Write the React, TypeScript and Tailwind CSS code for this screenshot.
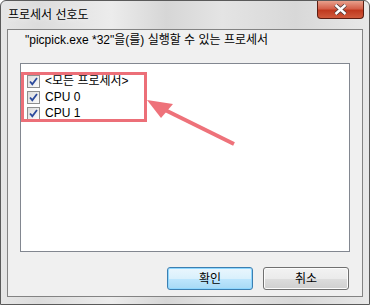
import React from "react";

const font = { fontFamily: '"Liberation Sans", "Noto Sans CJK KR", sans-serif' };

function CheckItem({ label }: { label: string }) {
  return (
    <div className="flex items-center h-[16px]">
      <span className="w-[13px] h-[13px] border border-[#8e8f8f] bg-gradient-to-br from-[#dcdcdc] to-[#fbfbfb] flex items-center justify-center">
        <svg width="11" height="11" viewBox="0 0 11 11">
          <path d="M2 5.5 L4.3 8.2 L9 2" fill="none" stroke="#2c4a9c" strokeWidth="1.8" />
        </svg>
      </span>
      <span className="ml-[5px] text-[12px] leading-none text-black">{label}</span>
    </div>
  );
}

export default function App() {
  return (
    <div
      className="relative w-[370px] h-[305px] flex flex-col border border-[#5a5a5a] rounded-t-[6px] bg-[linear-gradient(90deg,#e6e6e6_0%,#dcdcdc_10%,#ececec_30%,#d6d6d6_45%,#e4e4e4_60%,#d8d8d8_80%,#e8e8e8_100%)] overflow-hidden"
      style={font}
    >
      {/* 제목 표시줄 */}
      <div className="h-[28px] flex items-start justify-between shrink-0">
        <span className="mt-[8px] ml-[7px] text-[12px] leading-none text-black [text-shadow:0_0_6px_#ffffff]">
          프로세서 선호도
        </span>
        <div className="mr-[5px] w-[47px] h-[18px] rounded-b-[4px] border border-t-0 border-[#5b1d12] bg-[linear-gradient(180deg,#e8a08c_0%,#d4604a_45%,#c0391f_55%,#cf5a3c_100%)] flex items-center justify-center">
          <svg width="13" height="11" viewBox="0 0 13 11">
            <path d="M1.5 1 L11.5 10 M11.5 1 L1.5 10" stroke="#4a3a3a" strokeWidth="4" strokeLinecap="butt" />
            <path d="M1.5 1 L11.5 10 M11.5 1 L1.5 10" stroke="#ffffff" strokeWidth="2.4" strokeLinecap="butt" />
          </svg>
        </div>
      </div>

      {/* 본문 */}
      <div className="mx-[6px] h-[268px] border border-[#838383] bg-[#f0f0f0] flex flex-col shrink-0">
        <p className="mt-[3px] ml-[17px] text-[12px] leading-[14px] text-black">
          "picpick.exe *32"을(를) 실행할 수 있는 프로세서
        </p>
        <div className="relative mt-[16px] ml-[12px] w-[330px] h-[189px] border border-[#828790] bg-white">
          <div className="pt-[9px] pl-[6px] flex flex-col">
            <CheckItem label="<모든 프로세서>" />
            <CheckItem label="CPU 0" />
            <CheckItem label="CPU 1" />
          </div>
          <div className="absolute left-0 top-[8px] w-[126px] h-[50px] border-[3px] border-[#ec6f78]" />
        </div>
        <div className="mt-[15px] ml-[159px] flex gap-[10px]">
          <button className="w-[86px] h-[23px] rounded-[3px] border border-[#3c7fb1] bg-[linear-gradient(180deg,#eaf6fd_0%,#d9f0fc_50%,#bee6fd_51%,#a7d9f5_100%)] shadow-[inset_0_0_0_1px_#8fd7ff] text-[12px] text-black">
            확인
          </button>
          <button className="w-[86px] h-[23px] rounded-[3px] border border-[#707070] bg-[linear-gradient(180deg,#f2f2f2_0%,#ebebeb_50%,#dddddd_51%,#cfcfcf_100%)] shadow-[inset_0_0_0_1px_#fcfcfc] text-[12px] text-black">
            취소
          </button>
        </div>
      </div>

      {/* 화살표 주석 */}
      <svg className="absolute left-0 top-0 pointer-events-none" width="370" height="305" viewBox="0 0 370 305">
        <line x1="158" y1="106" x2="233" y2="143" stroke="#ee727a" strokeWidth="4" />
        <polygon points="146,99 172,103 160,117" fill="#ee727a" />
      </svg>
    </div>
  );
}
